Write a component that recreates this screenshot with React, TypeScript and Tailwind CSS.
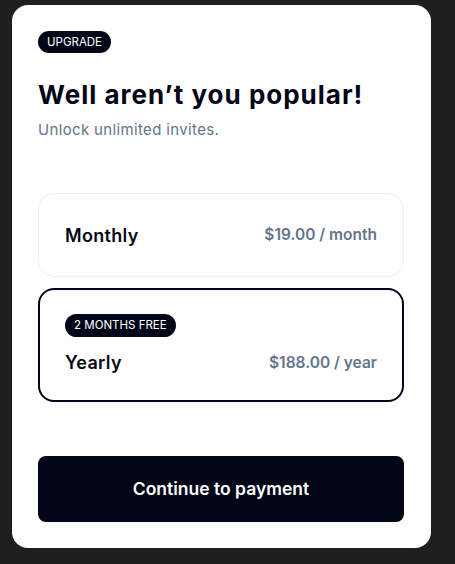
import React from "react";

export default function App() {
  return (
    <div className="min-h-[564px] w-full bg-[#1f1f1f] pl-[12px] pt-[5px]" style={{ fontFamily: "Inter, 'Liberation Sans', sans-serif" }}>
      <div className="w-[419px] bg-white rounded-[16px] p-[26px] pr-[27px] flex flex-col">
        <div className="flex">
          <span className="h-[22px] leading-[22px] px-[9px] rounded-full bg-[#020617] text-white text-[11.5px] font-normal">UPGRADE</span>
        </div>
        <h1 className="mt-[26px] text-[26px] leading-[32px] font-bold text-[#020617] tracking-[1px]">Well aren’t you popular!</h1>
        <p className="mt-[9px] text-[15px] leading-[20px] text-[#64748b] tracking-[0.35px]">Unlock unlimited invites.</p>
        <div className="mt-[53px] flex flex-col gap-[11px]">
          <div className="h-[84px] rounded-[16px] border border-[#eef0f3] px-[26px] flex items-center justify-between">
            <span className="text-[18px] font-semibold text-[#020617] tracking-[0.3px]">Monthly</span>
            <span className="text-[15.5px] font-semibold text-[#64748b]">$19.00 / month</span>
          </div>
          <div className="h-[114px] rounded-[16px] border-2 border-[#020617] px-[25px] pt-[24px] flex flex-col">
            <div className="flex">
              <span className="h-[23px] leading-[23px] px-[9px] rounded-full bg-[#020617] text-white text-[11.5px] font-normal">2 MONTHS FREE</span>
            </div>
            <div className="mt-[12px] flex items-center justify-between">
              <span className="text-[18px] font-semibold text-[#020617] tracking-[0.3px]">Yearly</span>
              <span className="text-[15.5px] font-semibold text-[#64748b]">$188.00 / year</span>
            </div>
          </div>
        </div>
        <button className="mt-[54px] h-[66px] w-full rounded-[8px] bg-[#020617] text-white text-[17.5px] font-semibold">Continue to payment</button>
      </div>
    </div>
  );
}
